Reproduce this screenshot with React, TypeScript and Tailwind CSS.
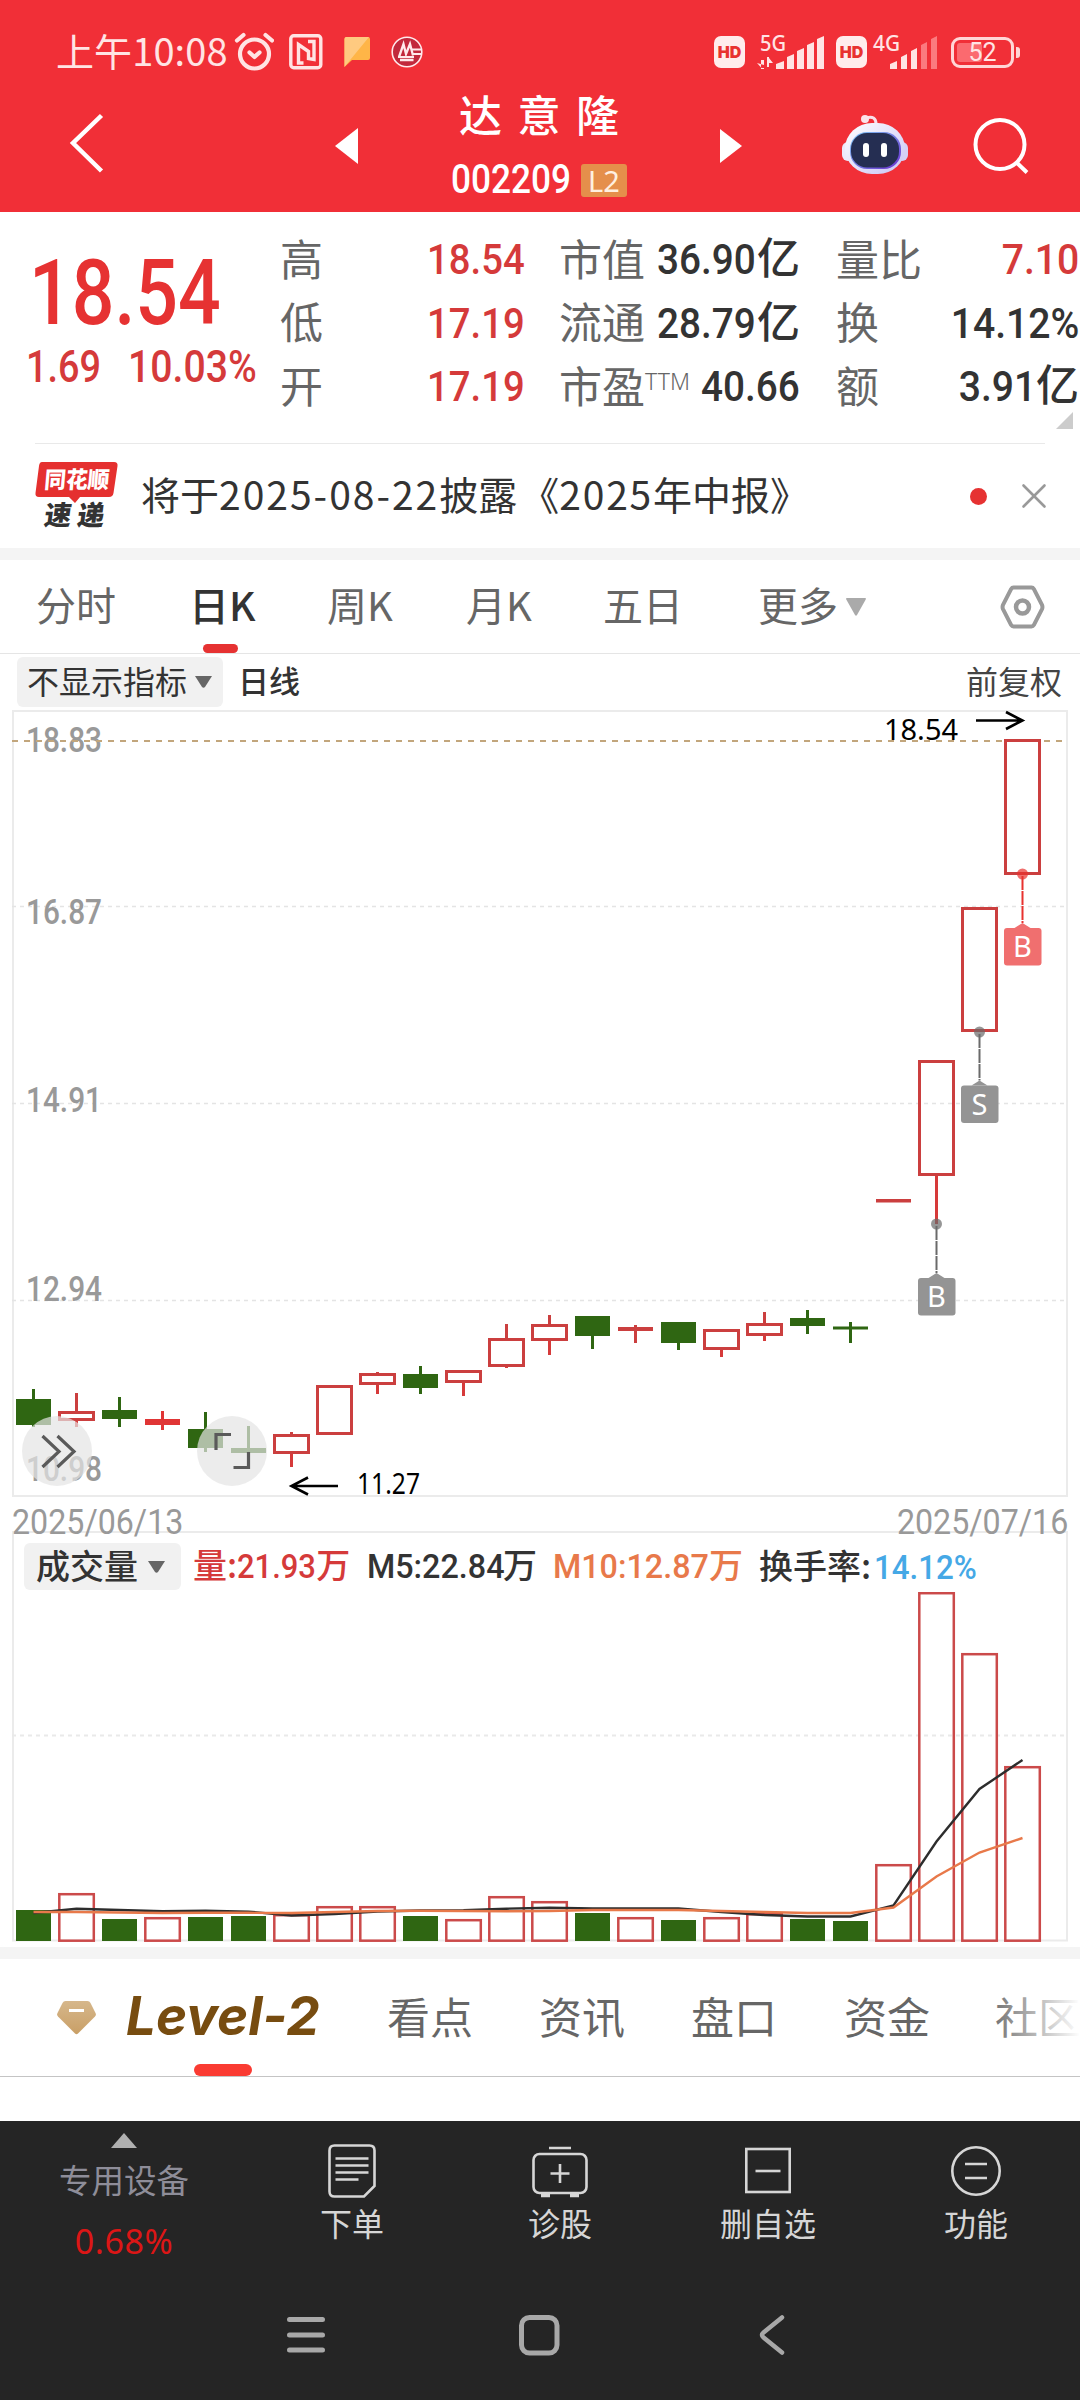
import { X } from 'lucide-react';

interface Candle {
  up: boolean;
  top: number;
  bottom: number;
  high: number;
  low: number;
  vol: number;
}

const RED = '#cb3f3f';
const GREEN = '#2f6612';

// y values are chart pixels, vol is the y of the bar top
const candles: Candle[] = [
  { up: false, top: 1399, bottom: 1425, high: 1389, low: 1427, vol: 1910 },
  { up: true, top: 1411, bottom: 1421, high: 1393, low: 1427, vol: 1893 },
  { up: false, top: 1410, bottom: 1419, high: 1397, low: 1427, vol: 1919 },
  { up: true, top: 1419, bottom: 1425, high: 1411, low: 1430, vol: 1917 },
  { up: false, top: 1429, bottom: 1448, high: 1412, low: 1452, vol: 1917 },
  { up: false, top: 1448, bottom: 1453, high: 1426, low: 1453, vol: 1916 },
  { up: true, top: 1434, bottom: 1454, high: 1432, low: 1467, vol: 1914 },
  { up: true, top: 1385, bottom: 1435, high: 1385, low: 1435, vol: 1906 },
  { up: true, top: 1373, bottom: 1385, high: 1372, low: 1394, vol: 1906 },
  { up: false, top: 1374, bottom: 1388, high: 1366, low: 1394, vol: 1916 },
  { up: true, top: 1370, bottom: 1383, high: 1370, low: 1396, vol: 1919 },
  { up: true, top: 1338, bottom: 1367, high: 1324, low: 1368, vol: 1896 },
  { up: true, top: 1324, bottom: 1341, high: 1315, low: 1355, vol: 1901 },
  { up: false, top: 1316, bottom: 1336, high: 1316, low: 1349, vol: 1913 },
  { up: true, top: 1327, bottom: 1331, high: 1325, low: 1343, vol: 1917 },
  { up: false, top: 1322, bottom: 1343, high: 1322, low: 1350, vol: 1920 },
  { up: true, top: 1329, bottom: 1350, high: 1329, low: 1357, vol: 1917 },
  { up: true, top: 1323, bottom: 1336, high: 1312, low: 1341, vol: 1913 },
  { up: false, top: 1318, bottom: 1326, high: 1310, low: 1334, vol: 1919 },
  { up: false, top: 1326.5, bottom: 1329.5, high: 1322, low: 1343, vol: 1921 },
  { up: true, top: 1199, bottom: 1202.5, high: 1199, low: 1202.5, vol: 1864 },
  { up: true, top: 1060, bottom: 1176, high: 1060, low: 1224, vol: 1592 },
  { up: true, top: 907, bottom: 1032, high: 907, low: 1032, vol: 1653 },
  { up: true, top: 739, bottom: 875, high: 739, low: 875, vol: 1766 },
];

const cx = (i: number) => 33.5 + i * 43;

const ma5 = [1913, 1908.8, 1910, 1911.2, 1910.6, 1911.6, 1915.5, 1914, 1911.5, 1910.5, 1910.3, 1908.7, 1907.8, 1908.4, 1908.5, 1908.5, 1912, 1915, 1916.5, 1916.5, 1905.5, 1841.5, 1789, 1760];
const ma10 = [1912, 1912, 1912.5, 1913, 1912.8, 1912.8, 1913, 1912, 1911, 1910.8, 1911, 1911.3, 1911, 1910, 1910, 1910, 1911, 1912, 1913, 1913, 1907.5, 1876.5, 1852.5, 1838];
const toPoints = (ys: number[]) => ys.map((y, i) => `${cx(i)},${y}`).join(' ');

const axisLabels = [
  { text: '18.83', y: 752 },
  { text: '16.87', y: 924 },
  { text: '14.91', y: 1112 },
  { text: '12.94', y: 1301 },
  { text: '10.98', y: 1481 },
];

const markers = [
  { label: 'B', x: 1022.5, dot: 874, y: 928, color: '#e8322f', fill: '#f06f6f' },
  { label: 'S', x: 979.5, dot: 1032, y: 1085.5, color: '#6a6a6a', fill: '#949494' },
  { label: 'B', x: 936.5, dot: 1224, y: 1278, color: '#6a6a6a', fill: '#949494' },
];

const StatusBar = () => (
  <div className="flex h-[84px] items-center pt-[20px] pl-[56px] text-[#ffe4e4]">
    <span className="-mt-[4px] w-[178px] text-[38px] leading-none tracking-[0.1px] whitespace-nowrap">上午10:08</span>
    <svg className="h-[40px] w-[40px]" viewBox="0 0 40 40" fill="none" stroke="currentColor" strokeWidth="4.200" strokeLinecap="round" strokeLinejoin="round">
      <circle cx="20.500" cy="22" r="14.500" />
      <path d="M3 8.500 9.500 3M38 8.500 31.500 3M15.500 20.500l5 4.500 5-4.500" />
    </svg>
    <svg className="ml-[15px] h-[36px] w-[34px]" viewBox="0 0 34 36" fill="none" stroke="currentColor" strokeWidth="3.400">
      <rect x="1.800" y="1.800" width="30" height="32" rx="3" />
      <path d="M14.500 29h-5V10.500l10 7v7l5.500 1V7.500h-6" />
    </svg>
    <svg className="ml-[21px] h-[30px] w-[27px]" viewBox="0 0 27 30">
      <path d="M2 0h22a2 2 0 0 1 2 2v19a2 2 0 0 1-2 2H8l-7.500 7V2a2 2 0 0 1 1.500-2z" fill="#ffb547" />
      <path d="M2 0h23L2 28l-1.500 2V2A2 2 0 0 1 2 0z" fill="#ffca80" />
    </svg>
    <svg className="ml-[20px] h-[32px] w-[32px]" viewBox="0 0 32 32" fill="none" stroke="#ffe9ec">
      <circle cx="16" cy="16" r="14.800" fill="#c2283c" strokeWidth="1.600" />
      <path d="M8 21l4.500-13 2.500 10L19 8l3 11.500M9 24h13.500" strokeWidth="2.300" />
      <path d="M21 13.500h9.500M22 18h9M7 21h16" strokeWidth="1.800" />
    </svg>

    <div className="ml-[291px] flex h-[32px] w-[31px] items-center justify-center rounded-[7px] bg-[#ffecec] font-['Inter'] text-[16px] font-black text-[#e8322f]">
      HD
    </div>
    <svg className="ml-[12px] h-[40px] w-[68px] overflow-visible" viewBox="0 0 68 40">
      <text x="3" y="19" fontFamily="Noto Sans" fontSize="22" fontWeight="500" fill="#ffe4e4" textLength="26" lengthAdjust="spacingAndGlyphs">5G</text>
      <path d="M4 37v-9h3v9zM0 31l4.500 5H7v-3zM10 25h2v10h-2zM12 26l4 5h-4z" fill="#ffe4e4" />
      <path d="M19 37v-5l8-3v8zM30 37V25l7-3v15zM40 37V19l7-3v21zM50 37V13l7-3v27zM60 37V7l7-3v33z" fill="#ffe4e4" />
    </svg>
    <div className="ml-[11px] flex h-[32px] w-[31px] items-center justify-center rounded-[7px] bg-[#ffecec] font-['Inter'] text-[16px] font-black text-[#e8322f]">
      HD
    </div>
    <svg className="ml-[5px] h-[40px] w-[66px] overflow-visible" viewBox="0 0 66 40">
      <text x="1" y="19" fontFamily="Noto Sans" fontSize="22" fontWeight="500" fill="#ffe4e4" textLength="27" lengthAdjust="spacingAndGlyphs">4G</text>
      <path d="M18 37v-5l7-3v8zM29 37V25l6-3v15zM39 37V19l6-3v21z" fill="#ffe4e4" />
      <path d="M49 37V13l6-3v27zM59 37V7l6-3v33z" fill="#fb7a7f" />
    </svg>
    <div className="relative ml-[13px] flex h-[31px] w-[63px] items-center justify-center rounded-[9px] border-[3px] border-[#ffd6d6]">
      <div className="absolute top-[3px] left-[3px] h-[19px] w-[25px] rounded-[3px] bg-[#fb6a6f]" />
      <span className="relative font-['Roboto'] text-[25px] leading-none">52</span>
    </div>
    <div className="ml-[2px] h-[11px] w-[4px] rounded-r-[3px] bg-[#ffd6d6]" />
  </div>
);

const TitleBar = () => (
  <div className="flex h-[128px] text-white">
    <svg className="mt-[28px] ml-[68px] h-[62px] w-[38px]" viewBox="0 0 38 62" fill="none" stroke="currentColor" strokeWidth="4.500">
      <path d="M33.500 3.500 5 31 33.500 59" />
    </svg>
    <svg className="mt-[44px] ml-[229px] h-[36px] w-[24px]" viewBox="0 0 24 36" fill="currentColor">
      <path d="M23 0v36L0 18z" />
    </svg>
    <div className="ml-[92px] flex w-[181px] flex-col">
      <div className="mt-[6px] pl-[8px] text-[43px] leading-[46px] font-medium tracking-[15.500px] whitespace-nowrap">达意隆</div>
      <div className="mt-[24px] flex h-[40px] items-center">
        <span className="w-[131px] origin-left scale-x-[0.88] font-['Roboto'] text-[40px] leading-none font-medium">002209</span>
        <span className="-ml-px flex h-[33px] w-[46px] items-center justify-center rounded-[3px] bg-[#e58f4b] font-['Noto_Sans'] text-[29px] leading-none text-[#fff0e0]">
          L2
        </span>
      </div>
    </div>
    <svg className="mt-[45px] ml-[88px] h-[34px] w-[24px]" viewBox="0 0 24 34" fill="currentColor">
      <path d="M0 0v34l22-17z" />
    </svg>
    <svg className="mt-[27px] ml-[97px] h-[64px] w-[68px]" viewBox="0 0 68 64">
      <defs>
        <linearGradient id="shell" x1="0" y1="0" x2="1" y2="1">
          <stop offset="0" stopColor="#ffffff" />
          <stop offset="1" stopColor="#c9c4f4" />
        </linearGradient>
        <linearGradient id="visor" x1="0" y1="0" x2="1" y2="1">
          <stop offset="0" stopColor="#7fc8f4" />
          <stop offset="1" stopColor="#6a2fd0" />
        </linearGradient>
      </defs>
      <path d="M25 7q10-3 10 6" fill="none" stroke="#f9e0ea" strokeWidth="3" />
      <circle cx="24" cy="8" r="4" fill="#fbe3ea" />
      <rect x="1" y="31" width="12" height="19" rx="6" fill="#ece9fb" />
      <rect x="55" y="31" width="12" height="19" rx="6" fill="#d5d0f6" />
      <rect x="4" y="12" width="60" height="51" rx="27" fill="url(#shell)" />
      <rect x="9" y="21" width="51" height="37" rx="17" fill="url(#visor)" />
      <rect x="10" y="22" width="48" height="34.500" rx="16" fill="#252e52" />
      <rect x="22" y="32" width="6" height="14" rx="3" fill="#fff" />
      <rect x="40" y="32" width="6" height="14" rx="3" fill="#fff" />
    </svg>
    <svg className="mt-[32px] ml-[64px] h-[60px] w-[58px]" viewBox="0 0 58 60" fill="none" stroke="currentColor" strokeWidth="4">
      <circle cx="27" cy="28.500" r="24.500" />
      <path d="M43 46l11 10.500" />
    </svg>
  </div>
);

const quoteRows = [
  { l1: '高', v1: '18.54', l2: '市值', v2: '36.90', l3: '量比', v3: '7.10', unit3: '', red3: true },
  { l1: '低', v1: '17.19', l2: '流通', v2: '28.79', l3: '换', v3: '14.12%', unit3: '', red3: false },
  { l1: '开', v1: '17.19', l2: '市盈', v2: '40.66', l3: '额', v3: '3.91', unit3: '亿', red3: false },
];

const QuotePanel = () => (
  <div className="relative flex h-[231px]">
    <div className="flex w-[280px] flex-col text-[#e63232]">
      <div className="mt-[35px] ml-[29px] h-[94px] w-[230px] origin-left scale-x-[0.835] font-['Roboto'] text-[90px] leading-[94px] font-medium">18.54</div>
      <div className="flex h-[52px] items-center font-['Roboto'] text-[44px] leading-none font-medium text-[#d53a3a]">
        <span className="ml-[26px] w-[102px] origin-left scale-x-[0.86]">1.69</span>
        <span className="w-[150px] origin-left scale-x-[0.89]">10.03%</span>
      </div>
    </div>
    <div className="mt-[16px] flex flex-1 flex-col text-[43px] leading-none">
      {quoteRows.map((row) => (
        <div key={row.l1} className="flex h-[63.500px] items-center whitespace-nowrap text-[#666]">
          <span className="-mt-[5px] w-[142px] shrink-0">{row.l1}</span>
          <span className="flex w-[103px] shrink-0 justify-end font-['Roboto'] font-medium text-[#d53a3a]">
            <span className="origin-right scale-x-[0.89]">{row.v1}</span>
          </span>
          <span className="-mt-[5px] ml-[34px] flex w-[98px] shrink-0">
            {row.l2}
            {row.l2 === '市盈' && <span className="pt-[3px] font-['Noto_Sans'] text-[23px] leading-[30px] font-light">TTM</span>}
          </span>
          {row.l2 === '市盈' ? (
            <span className="flex w-[143px] shrink-0 justify-end font-['Roboto'] font-medium text-[#333]">
              <span className="origin-right scale-x-[0.9]">{row.v2}</span>
            </span>
          ) : (
            <span className="flex w-[143px] shrink-0 font-medium text-[#333]">
              <span className="w-[100px] origin-left scale-x-[0.9] font-['Roboto']">{row.v2}</span>
              <span className="-mt-[4px]">亿</span>
            </span>
          )}
          <span className="-mt-[5px] ml-[36px] w-[100px] shrink-0">{row.l3}</span>
          <span className={`flex w-[143px] shrink-0 justify-end font-medium ${row.red3 ? 'text-[#d53a3a]' : 'text-[#333]'}`}>
            <span className="origin-right scale-x-[0.91] font-['Roboto']">{row.v3}</span>
            {row.unit3 && <span className="-mt-[4px]">{row.unit3}</span>}
          </span>
        </div>
      ))}
    </div>
    <svg className="absolute top-[200px] left-[1056px] h-[17px] w-[17px]" viewBox="0 0 17 17">
      <path d="M17 0v17H0z" fill="#ccc" />
    </svg>
  </div>
);

const NewsRow = () => (
  <div className="mx-[35px] flex h-[105px] items-center border-t border-[#e9e9e9]">
    <svg className="h-[68px] w-[84px] overflow-visible" viewBox="0 0 84 68">
      <path d="M7 0h72q4 0 3.500 4l-4 27q-.6 4-4.500 4H45l-5 6-6-6H4q-4 0-3.500-4l3.500-27q.5-4 3-4z" fill="#e5302f" />
      <text x="8" y="26" fontFamily="Noto Sans CJK SC" fontSize="23" fontWeight="900" fill="#fff" textLength="65" lengthAdjust="spacingAndGlyphs" transform="skewX(-5) translate(3 0)">同花顺</text>
      <text x="8" y="63" fontFamily="Noto Sans CJK SC" fontSize="27" fontWeight="900" fill="#333" textLength="60" transform="skewX(-8) translate(9 0)">速递</text>
    </svg>
    <div className="-mt-[5px] ml-[22px] flex-1 text-[39px] leading-none whitespace-nowrap text-[#333]">
      将于<span className="tracking-[2.000px]">2025-08-22</span>披露<span className="ml-[3px]">《</span><span className="tracking-[1.800px]">2025</span>年中报》
    </div>
    <div className="h-[17px] w-[17px] rounded-full bg-[#e63232]" />
    <X className="-mr-[10px] ml-[26px] h-[42px] w-[42px] text-[#999]" strokeWidth={1.5} />
  </div>
);

const PeriodTabs = () => (
  <div className="flex h-[94px] items-center border-b border-[#e5e5e5] text-[40px] leading-none text-[#666]">
    <span className="-mt-[5px] ml-[36px] w-[153px]">分时</span>
    <div className="relative flex h-full w-[138px] items-center">
      <span className="-mt-[5px] font-medium text-[#333]">日K</span>
      <div className="absolute bottom-0 left-[14px] h-[9px] w-[35px] rounded-full bg-[#e63232]" />
    </div>
    <span className="-mt-[5px] w-[139px]">周K</span>
    <span className="-mt-[5px] w-[137px]">月K</span>
    <span className="-mt-[5px] w-[155px]">五日</span>
    <span className="-mt-[5px]">更多</span>
    <svg className="ml-[8px] h-[18px] w-[20px]" viewBox="0 0 20 18" fill="#aaa">
      <path d="M1 0h18q1.500 0 .7 1.500L11 17q-1 1.500-2 0L.3 1.500Q-.5 0 1 0z" />
    </svg>
    <svg className="ml-[134px] h-[44px] w-[45px]" viewBox="0 0 45 44" fill="none" stroke="#999" strokeWidth="4" strokeLinejoin="round">
      <path d="M13.500 2.500h18q1.500 0 2.300 1.400l8.200 16q.9 2.100 0 4.200l-8.200 16q-.8 1.400-2.300 1.400h-18q-1.500 0-2.300-1.400l-8.200-16q-.9-2.100 0-4.200l8.200-16q.8-1.400 2.300-1.400z" />
      <circle cx="22.500" cy="22" r="6.500" strokeWidth="4.500" />
    </svg>
  </div>
);

const IndicatorRow = () => (
  <div className="flex h-[55px] items-center text-[32px] leading-none text-[#333]">
    <div className="ml-[17px] flex h-[50px] w-[206px] items-center rounded-[6px] bg-[#f1f1f1] pl-[10px]">
      <span className="-mt-[4px]">不显示指标</span>
      <svg className="ml-[8px] h-[12px] w-[17px]" viewBox="0 0 17 12" fill="#666">
        <path d="M0 0h17l-7 11q-1.500 1.500-3 0z" />
      </svg>
    </div>
    <span className="-mt-[4px] ml-[15px] text-[31px] font-medium">日线</span>
    <span className="-mt-[4px] mr-[18px] ml-auto text-[#444]">前复权</span>
  </div>
);

const PriceChart = () => (
  <svg className="block h-[790px] w-[1080px]" viewBox="0 709 1080 790">
    <rect x="13" y="711" width="1054" height="785" fill="none" stroke="#ebebeb" strokeWidth="2" />
    {[906.5, 1103.5, 1300.5].map((y) => (
      <line key={y} x1="12" x2="1067" y1={y} y2={y} stroke="#e4e4e4" strokeWidth="1.300" strokeDasharray="4 4" />
    ))}
    {axisLabels.map((l) => (
      <text key={l.text} x="26" y={l.y} fontFamily="Roboto" fontSize="35" fontWeight="500" fill="#999" textLength="76" lengthAdjust="spacingAndGlyphs">
        {l.text}
      </text>
    ))}
    <line x1="12" x2="1067" y1="741" y2="741" stroke="#c2a67c" strokeWidth="2" strokeDasharray="6 6" />
    {candles.map((c, i) => {
      const thin = c.bottom - c.top < 7;
      const color = c.up ? RED : GREEN;
      if (!c.up || thin) {
        return (
          <g key={i} fill={thin && c.up && c.bottom - c.top > 5 ? '#e03535' : color}>
            <rect x={cx(i) - 17.5} y={c.top} width="35" height={c.bottom - c.top} />
            {c.low - c.high > 4 && <rect x={cx(i) - 1.5} y={c.high} width="3" height={c.low - c.high} />}
          </g>
        );
      }
      return (
        <g key={i}>
          <rect x={cx(i) - 1.5} y={c.high} width="3" height={c.top - c.high} fill={RED} />
          <rect x={cx(i) - 1.5} y={c.bottom} width="3" height={c.low - c.bottom} fill="#d63a3a" />
          <rect x={cx(i) - 17} y={c.top + 1.5} width="34" height={c.bottom - c.top - 3} fill="none" stroke={RED} strokeWidth="3" />
        </g>
      );
    })}
    {markers.map((m) => (
      <g key={m.x}>
        <circle cx={m.x} cy={m.dot} r="5.500" fill={m.color} opacity="0.7" />
        <line x1={m.x} x2={m.x} y1={m.dot + 2} y2={m.y - 5} stroke={m.color} strokeWidth="2" strokeDasharray="14 1" />
        <path d={`M${m.x - 8} ${m.y}l8-5 8 5z`} fill={m.fill} />
        <rect x={m.x - 18.5} y={m.y} width="37.500" height="37.500" rx="3" fill={m.fill} />
        <text x={m.x} y={m.y + 29} fontFamily="Noto Sans" fontSize="29" fill="#fff" textAnchor="middle">
          {m.label}
        </text>
      </g>
    ))}
    <g fill="none" stroke="#000" strokeWidth="2.600">
      <path d="M976 720.500h46M1006 712l16.500 8.500-16.500 8.500" />
      <path d="M338 1486h-46M308 1477.500l-16.500 8.500 16.500 8.500" />
    </g>
    <text x="884" y="740" fontFamily="Noto Sans" fontSize="29" textLength="74" lengthAdjust="spacingAndGlyphs">18.54</text>
    <text x="357" y="1494" fontFamily="Noto Sans" fontSize="29" textLength="63" lengthAdjust="spacingAndGlyphs">11.27</text>
    <circle cx="57" cy="1451" r="35" fill="#e4e4e4" opacity="0.7" />
    <circle cx="232" cy="1451" r="35" fill="#e4e4e4" opacity="0.7" />
    <g fill="none" stroke="#5a5a5a" strokeWidth="3.200">
      <path d="M42.500 1436l16.500 15.500-16.500 15.500M57.500 1436l16.500 15.500-16.500 15.500" />
      <path d="M216 1450v-15.500h15M233.500 1467.500h15V1452" />
    </g>
  </svg>
);

const VolumePanel = () => (
  <div>
    <div className="flex h-[32px] items-end justify-between px-[12px] font-['Roboto'] text-[35px] leading-none text-[#999]">
      <span className="-mb-[9px] origin-left scale-x-[0.92]">2025/06/13</span>
      <span className="-mb-[9px] origin-right scale-x-[0.92]">2025/07/16</span>
    </div>
    <div className="mx-[12px] flex h-[61px] items-center border-x-2 border-t-2 border-[#ebebeb] pt-[8px] text-[34px] leading-none font-medium text-[#333]">
      <div className="ml-[10px] flex h-[47px] w-[157px] items-center rounded-[6px] bg-[#f1f1f1] pl-[12px]">
        <span className="-mt-[4px]">成交量</span>
        <svg className="ml-[10px] h-[12px] w-[17px]" viewBox="0 0 17 12" fill="#666">
          <path d="M0 0h17l-7 11q-1.500 1.500-3 0z" />
        </svg>
      </div>
      <span className="-mt-[3px] ml-[12px] flex w-[174px] whitespace-nowrap text-[#d53a3a]">
        量:<span className="w-[79px] origin-left scale-x-[0.91] pt-[2px] font-['Roboto']">21.93</span>万
      </span>
      <span className="-mt-[3px] flex w-[186px] whitespace-nowrap">
        <span className="w-[136px] origin-left scale-x-[0.95] pt-[2px] font-['Roboto']">M5:22.84</span>万
      </span>
      <span className="-mt-[3px] flex w-[206px] whitespace-nowrap text-[#e8794a]">
        <span className="w-[156px] origin-left scale-x-[0.95] pt-[2px] font-['Roboto']">M10:12.87</span>万
      </span>
      <span className="-mt-[3px] w-[115px] whitespace-nowrap">换手率:</span>
      <span className="origin-left scale-x-[0.92] font-['Roboto'] text-[#45a8e6]">14.12%</span>
    </div>
    <svg className="block h-[355px] w-[1080px]" viewBox="0 1592 1080 355">
      <path d="M13 1592v348.500h1054V1592" fill="none" stroke="#ebebeb" strokeWidth="2" />
      <line x1="12" x2="1067" y1="1735.500" y2="1735.500" stroke="#e9e9e9" strokeWidth="2" strokeDasharray="4 4" />
      {candles.map((c, i) =>
        c.up ? (
          <rect key={i} x={cx(i) - 17.2} y={c.vol + 1.2} width="34.500" height={1940.7 - c.vol - 1.2} fill="none" stroke="#cb4a4a" strokeWidth="2.500" />
        ) : (
          <rect key={i} x={cx(i) - 17.5} y={c.vol} width="35" height={1941 - c.vol} fill={GREEN} />
        )
      )}
      <polyline points={toPoints(ma5)} fill="none" stroke="#2d2d2d" strokeWidth="2.400" />
      <polyline points={toPoints(ma10)} fill="none" stroke="#e8794a" strokeWidth="2.400" />
    </svg>
  </div>
);

const InfoTabs = () => (
  <div className="relative flex h-[118px] items-center overflow-hidden border-b border-[#c4c4c4] text-[43px] leading-none whitespace-nowrap text-[#666]">
    <svg className="ml-[57px] h-[34px] w-[39px] shrink-0" viewBox="0 0 39 34">
      <defs>
        <linearGradient id="gem" x1="0" y1="0" x2="0" y2="1">
          <stop offset="0" stopColor="#d6b78b" />
          <stop offset="1" stopColor="#c99f66" />
        </linearGradient>
      </defs>
      <path d="M8.500 0h22q2 0 3 2l5 10q1 2-.5 3.500l-17 17q-1.500 1.500-3 0l-17-17Q-.5 14 .5 12l5-10q1-2 3-2z" fill="url(#gem)" />
      <path d="M12 9.500h15" stroke="#fff" strokeWidth="3" />
    </svg>
    <div className="relative ml-[30px] flex h-full w-[261px] shrink-0 items-center">
      <span className="-mt-[3px] origin-left scale-x-[0.98] font-['Inter'] text-[54px] font-bold text-[#774c10] italic">Level-2</span>
      <div className="absolute bottom-0 left-[68px] h-[12px] w-[58px] rounded-full bg-[#fa3b32]" />
    </div>
    <span className="-mt-[5px] w-[152px] shrink-0">看点</span>
    <span className="-mt-[5px] w-[152px] shrink-0">资讯</span>
    <span className="-mt-[5px] w-[153px] shrink-0">盘口</span>
    <span className="-mt-[5px] w-[151px] shrink-0">资金</span>
    <span className="-mt-[5px] shrink-0">社区</span>
    <div className="absolute top-0 right-0 h-[110px] w-[95px] bg-gradient-to-r from-white/0 to-white" />
  </div>
);

const BottomBar = () => (
  <div className="h-[279px] bg-[#252525] text-[#d6d6d6]">
    <div className="flex h-[150px] text-[32px] leading-none">
      <div className="ml-[20px] flex w-[208px] flex-col items-center">
        <svg className="mt-[12px] h-[15px] w-[26px]" viewBox="0 0 26 15">
          <path d="M13 0l13 15H0z" fill="#b0b0b0" />
        </svg>
        <span className="mt-[15px] text-[32.500px] text-[#8e8d99]">专用设备</span>
        <span className="mt-[28px] font-['Noto_Sans'] text-[34px] tracking-[0.6px] text-[#dc1616]">0.68%</span>
      </div>
      <div className="flex w-[248px] flex-col items-center">
        <svg className="mt-[23px] h-[54px] w-[48px]" viewBox="0 0 48 54" fill="none" stroke="currentColor" strokeWidth="2.600">
          <path d="M6.500 1.500h35q5 0 5 5V42L36 52.500H6.500q-5 0-5-5v-41q0-5 5-5z" />
          <path d="M7.500 14.500h33M7.500 21.500h33M7.500 28.500h33M7.500 35.500h23" />
        </svg>
        <span className="mt-[8px]">下单</span>
      </div>
      <div className="flex w-[168px] flex-col items-center">
        <svg className="mt-[25px] h-[52px] w-[56px]" viewBox="0 0 56 52" fill="none" stroke="currentColor" strokeWidth="2.600">
          <rect x="1.500" y="8" width="53" height="39" rx="6" />
          <path d="M17 2h22M28 18v19M18.500 27.500h19" />
          <path d="M9 49.500h9M38 49.500h9" strokeWidth="3.500" />
        </svg>
        <span className="mt-[8px]">诊股</span>
      </div>
      <div className="flex w-[248px] flex-col items-center">
        <svg className="mt-[25px] h-[52px] w-[46px]" viewBox="0 0 46 52" fill="none" stroke="currentColor" strokeWidth="2.600">
          <rect x="1.300" y="3" width="43.400" height="43" />
          <path d="M10.500 25h25" />
        </svg>
        <span className="mt-[8px]">删自选</span>
      </div>
      <div className="flex w-[168px] flex-col items-center">
        <svg className="mt-[25px] h-[52px] w-[50px]" viewBox="0 0 50 52" fill="none" stroke="currentColor" strokeWidth="2.600">
          <circle cx="25" cy="25" r="23.700" />
          <path d="M14 18h22M14 32h22" />
        </svg>
        <span className="mt-[8px]">功能</span>
      </div>
    </div>
    {/* System navigation */}
    <div className="flex h-[129px] text-[#a8a8a8]">
      <svg className="mt-[44px] ml-[286px] h-[40px] w-[40px]" viewBox="0 0 40 40" fill="none" stroke="currentColor" strokeWidth="5" strokeLinecap="round">
        <path d="M3.500 4.500h33M3.500 20h33M3.500 35h33" />
      </svg>
      <svg className="mt-[43px] ml-[192px] h-[42px] w-[42px]" viewBox="0 0 42 42" fill="none" stroke="currentColor" strokeWidth="5">
        <rect x="3.500" y="3.500" width="35.500" height="35.500" rx="8" />
      </svg>
      <svg className="mt-[43px] ml-[198px] h-[42px] w-[28px]" viewBox="0 0 28 42" fill="none" stroke="currentColor" strokeWidth="4.500" strokeLinecap="round" strokeLinejoin="round">
        <path d="M24 3.500 5.500 18.500q-3 2.500 0 5L24 38.500" />
      </svg>
    </div>
  </div>
);

export default function App() {
  return (
    <div className="h-[2400px] w-[1080px] overflow-hidden bg-white font-['Noto_Sans_CJK_SC',sans-serif]">
      <header className="h-[212px] bg-[#f12f37]">
        <StatusBar />
        <TitleBar />
      </header>
      <QuotePanel />
      <NewsRow />
      <div className="h-[12px] bg-[#f4f4f4]" />
      <PeriodTabs />
      <IndicatorRow />
      <PriceChart />
      <VolumePanel />
      <div className="h-[12px] bg-[#f4f4f4]" />
      <InfoTabs />
      <div className="h-[44px]" />
      <BottomBar />
    </div>
  );
}
